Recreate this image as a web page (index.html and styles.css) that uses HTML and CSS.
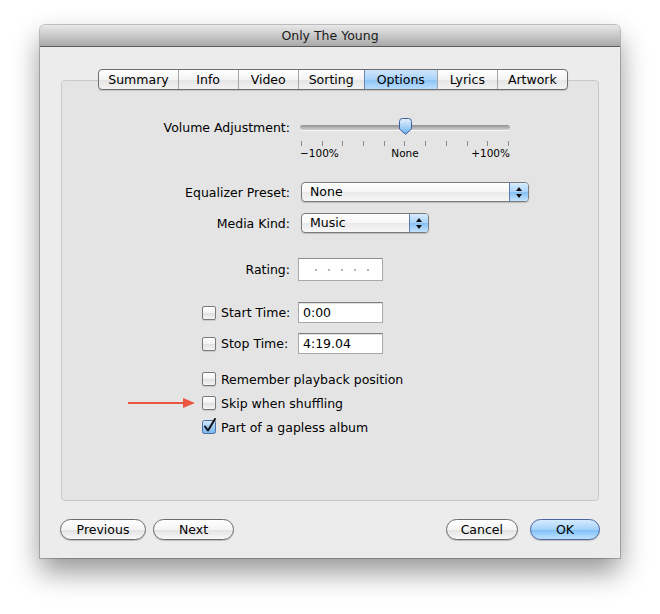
FILE: index.html
```html
<!DOCTYPE html>
<html>
<head>
<meta charset="utf-8">
<link rel="stylesheet" href="styles.css">
</head>
<body>
<div class="window">
  <div class="titlebar">Only The Young</div>
  <div class="content">
    <div class="tabs">
      <div class="tab">Summary</div>
      <div class="tab">Info</div>
      <div class="tab">Video</div>
      <div class="tab">Sorting</div>
      <div class="tab selected">Options</div>
      <div class="tab">Lyrics</div>
      <div class="tab">Artwork</div>
    </div>
    <div class="group">
      <div class="row vol-row">
        <div class="label">Volume Adjustment:</div>
        <div class="slider">
          <div class="track"></div>
          <svg class="thumb" width="15" height="17" viewBox="0 0 15 17">
            <defs>
              <linearGradient id="tg" x1="0" y1="0" x2="0" y2="1">
                <stop offset="0" stop-color="#e4f1fd"/>
                <stop offset="0.5" stop-color="#a9d2f7"/>
                <stop offset="1" stop-color="#6aaeee"/>
              </linearGradient>
            </defs>
            <path d="M1.5 3.5 Q1.5 0.5 4.5 0.5 H10.5 Q13.5 0.5 13.5 3.5 V11 L7.5 16.3 L1.5 11 Z" fill="url(#tg)" stroke="#3f5f9a" stroke-width="1"/>
          </svg>
        </div>
      </div>
      <div class="scale">
        <div class="ticks">
          <span></span><span></span><span></span><span></span><span></span><span></span><span></span><span></span><span></span><span></span><span></span>
        </div>
        <div class="scale-labels"><span>−100%</span><span>None</span><span>+100%</span></div>
      </div>
      <div class="row eq-row">
        <div class="label">Equalizer Preset:</div>
        <div class="popup popup-wide">
          <span class="popup-text">None</span>
          <span class="popup-arrows"><i class="up"></i><i class="down"></i></span>
        </div>
      </div>
      <div class="row media-row">
        <div class="label">Media Kind:</div>
        <div class="popup popup-narrow">
          <span class="popup-text">Music</span>
          <span class="popup-arrows"><i class="up"></i><i class="down"></i></span>
        </div>
      </div>
      <div class="row rating-row">
        <div class="label">Rating:</div>
        <div class="rating"><i></i><i></i><i></i><i></i><i></i></div>
      </div>
      <div class="row start-row">
        <div class="label check-label"><span class="checkbox"></span><span>Start Time:</span></div>
        <div class="field">0:00</div>
      </div>
      <div class="row stop-row">
        <div class="label check-label"><span class="checkbox"></span><span>Stop Time:</span></div>
        <div class="field">4:19.04</div>
      </div>
      <div class="checks">
        <div class="check-row"><span class="checkbox"></span><span>Remember playback position</span></div>
        <div class="check-row"><span class="checkbox"></span><span>Skip when shuffling</span></div>
        <div class="check-row">
          <svg class="checked" width="16" height="16" viewBox="0 0 16 16">
            <defs>
              <linearGradient id="cg" x1="0" y1="0" x2="0" y2="1">
                <stop offset="0" stop-color="#d7ebfd"/>
                <stop offset="0.5" stop-color="#9ccbf5"/>
                <stop offset="1" stop-color="#76b5ee"/>
              </linearGradient>
            </defs>
            <rect x="0.5" y="2.5" width="13" height="13" rx="2" fill="url(#cg)" stroke="#4c6a9e"/>
            <path d="M3 8.5 L6 12.5 L13 1" fill="none" stroke="#111" stroke-width="2" stroke-linejoin="round" stroke-linecap="round"/>
          </svg>
          <span>Part of a gapless album</span>
        </div>
      </div>
    </div>
    <div class="buttons">
      <div class="btn-group">
        <div class="btn btn-prev">Previous</div>
        <div class="btn btn-next">Next</div>
      </div>
      <div class="btn-group">
        <div class="btn">Cancel</div>
        <div class="btn default">OK</div>
      </div>
    </div>
  </div>
</div>
<svg class="annot-arrow" width="70" height="14" viewBox="0 0 70 14">
  <line x1="0" y1="7" x2="58" y2="7" stroke="#ea5640" stroke-width="2"/>
  <path d="M55 2 L67 7 L55 12 Z" fill="#ea5640"/>
</svg>
</body>
</html>
```

FILE: styles.css
```css
* { box-sizing: border-box; }
html, body { margin: 0; padding: 0; background: #ffffff; }
body {
  padding: 25px 0 0 40px;
  font-family: "DejaVu Sans", "Liberation Sans", sans-serif;
  font-size: 12.5px;
  color: #000;
  position: relative;
  height: 614px;
  overflow: hidden;
}
.window {
  width: 580px;
  height: 533px;
  background: #ececec;
  border-radius: 5px 5px 0 0;
  box-shadow: 0 0 0 1px rgba(0,0,0,0.22), 0 14px 28px rgba(0,0,0,0.42);
  display: flex;
  flex-direction: column;
}
.titlebar {
  height: 22px;
  line-height: 22px;
  text-align: center;
  font-size: 12.5px;
  color: #1a1a1a;
  background: linear-gradient(#e8e8e8, #c9c9c9 50%, #a9a9a9);
  border-bottom: 1px solid #5c5c5c;
  border-radius: 5px 5px 0 0;
}
.content {
  padding: 22px 21px 0 21px;
  display: flex;
  flex-direction: column;
}
.tabs {
  display: flex;
  justify-content: center;
  height: 21px;
  margin: 0 auto -10px;
  position: relative;
  z-index: 1;
  border: 1px solid #6e6e6e;
  border-radius: 4px;
  background: linear-gradient(#ffffff, #f3f3f3 50%, #e4e4e4 51%, #f2f2f2);
  box-shadow: 0 1px 1px rgba(0,0,0,0.15);
  transform: translateX(3px);
}
.tab {
  min-width: 60px;
  padding: 0 10px;
  text-align: center;
  line-height: 19px;
  border-left: 1px solid #a5a5a5;
}
.tab:first-child { border-left: none; padding: 0 9px; }
.tab.selected {
  background: linear-gradient(#cfe6fd, #a9d3fa 50%, #8cc3f5 51%, #b9ddfd);
  border-left: 1px solid #6a84b0;
  border-right: 1px solid #6a84b0;
  margin-right: -1px;
  padding: 0 12px;
}
.group {
  height: 421px;
  background: #e4e4e4;
  border: 1px solid #c9c9c9;
  border-radius: 4px;
  padding-top: 36px;
}
.row {
  display: flex;
  align-items: center;
}
.label {
  width: 228px;
  display: flex;
  justify-content: flex-end;
  align-items: center;
  gap: 5px;
  flex: none;
  white-space: nowrap;
}
.label.check-label {
  justify-content: flex-start;
  padding-left: 140px;
}
.vol-row { height: 20px; }
.slider {
  position: relative;
  width: 210px;
  height: 20px;
  margin-left: 10px;
  display: flex;
  align-items: center;
}
.track {
  width: 210px;
  height: 5px;
  border-radius: 3px;
  background: linear-gradient(#8f8f8f, #b8b8b8 60%, #cfcfcf);
  box-shadow: 0 1px 0 rgba(255,255,255,0.7);
}
.thumb {
  position: absolute;
  left: 98px;
  top: 1px;
}
.scale {
  margin-left: 238px;
  width: 210px;
  height: 24px;
}
.ticks {
  display: flex;
  justify-content: space-between;
  padding: 0 1px;
  margin-top: 4px;
  height: 5px;
}
.ticks span {
  width: 1px;
  height: 5px;
  background: #8a8a8a;
}
.scale-labels {
  display: flex;
  justify-content: space-between;
  font-size: 10.5px;
  line-height: 12px;
  margin-top: 1px;
}
.eq-row { margin-top: 17px; height: 20px; }
.media-row { margin-top: 11px; height: 20px; }
.popup {
  height: 20px;
  margin-left: 11px;
  border: 1px solid #7b7b7b;
  border-radius: 4px;
  background: linear-gradient(#ffffff, #f6f6f6 50%, #e9e9e9 51%, #f7f7f7);
  box-shadow: 0 1px 1px rgba(0,0,0,0.18);
  display: flex;
  align-items: center;
  overflow: hidden;
}
.popup-wide { width: 228px; }
.popup-narrow { width: 128px; }
.popup-text {
  flex: 1;
  padding-left: 8px;
  line-height: 18px;
}
.popup-arrows {
  width: 19px;
  height: 18px;
  border-left: 1px solid #5d7bb0;
  background: linear-gradient(#d7ecfe, #a9d3f8 50%, #86c0f3 51%, #c3e3fe);
  display: flex;
  flex-direction: column;
  align-items: center;
  justify-content: center;
  gap: 3px;
}
.popup-arrows i {
  width: 0;
  height: 0;
  border-left: 3px solid transparent;
  border-right: 3px solid transparent;
}
.popup-arrows .up { border-bottom: 4px solid #111; }
.popup-arrows .down { border-top: 4px solid #111; }
.rating-row { margin-top: 25px; height: 23px; }
.rating {
  margin-left: 8px;
  width: 85px;
  height: 23px;
  background: #fff;
  border: 1px solid #a9a9a9;
  border-top-color: #8e8e8e;
  display: flex;
  align-items: center;
  padding-left: 16px;
  gap: 11px;
}
.rating i {
  width: 2px;
  height: 2px;
  background: #b4b4b4;
}
.start-row { margin-top: 21px; height: 21px; }
.stop-row { margin-top: 10px; height: 21px; }
.field {
  margin-left: 8px;
  width: 85px;
  height: 21px;
  background: #fff;
  border: 1px solid #a9a9a9;
  border-top-color: #7f7f7f;
  box-shadow: inset 0 1px 0 #e0e0e0;
  padding-left: 4px;
  line-height: 19px;
}
.checkbox {
  width: 14px;
  height: 14px;
  border: 1px solid #7a7a7a;
  border-radius: 2px;
  background: linear-gradient(#ffffff, #f1f1f1 50%, #e0e0e0 51%, #f4f4f4);
  box-shadow: 0 1px 1px rgba(0,0,0,0.12);
  flex: none;
}
.checks {
  margin-top: 13px;
  padding-left: 140px;
  display: flex;
  flex-direction: column;
}
.check-row {
  height: 24px;
  display: flex;
  align-items: center;
  gap: 5px;
}
.checked {
  margin-top: -3px;
  margin-right: -2px;
  flex: none;
}
.buttons {
  margin-top: 18px;
  display: flex;
  justify-content: space-between;
}
.btn-group {
  display: flex;
  gap: 7px;
}
.btn-group:last-child { gap: 12px; margin-right: -1px; }
.btn {
  height: 21px;
  min-width: 70px;
  padding: 0 14px;
  border: 1px solid #6b6b6b;
  border-radius: 11px;
  background: linear-gradient(#ffffff, #f4f4f4 50%, #e1e1e1 51%, #f8f8f8);
  box-shadow: 0 1px 1px rgba(0,0,0,0.2);
  text-align: center;
  line-height: 19px;
}
.btn-prev { width: 86px; margin-left: -1px; }
.btn-next { width: 81px; }
.btn.default {
  border-color: #4a64a0;
  background: linear-gradient(#d4ebfe, #a6d3fb 50%, #7dbdf6 51%, #bfe2fe);
}
.annot-arrow {
  position: absolute;
  left: 128px;
  top: 396px;
}
```
